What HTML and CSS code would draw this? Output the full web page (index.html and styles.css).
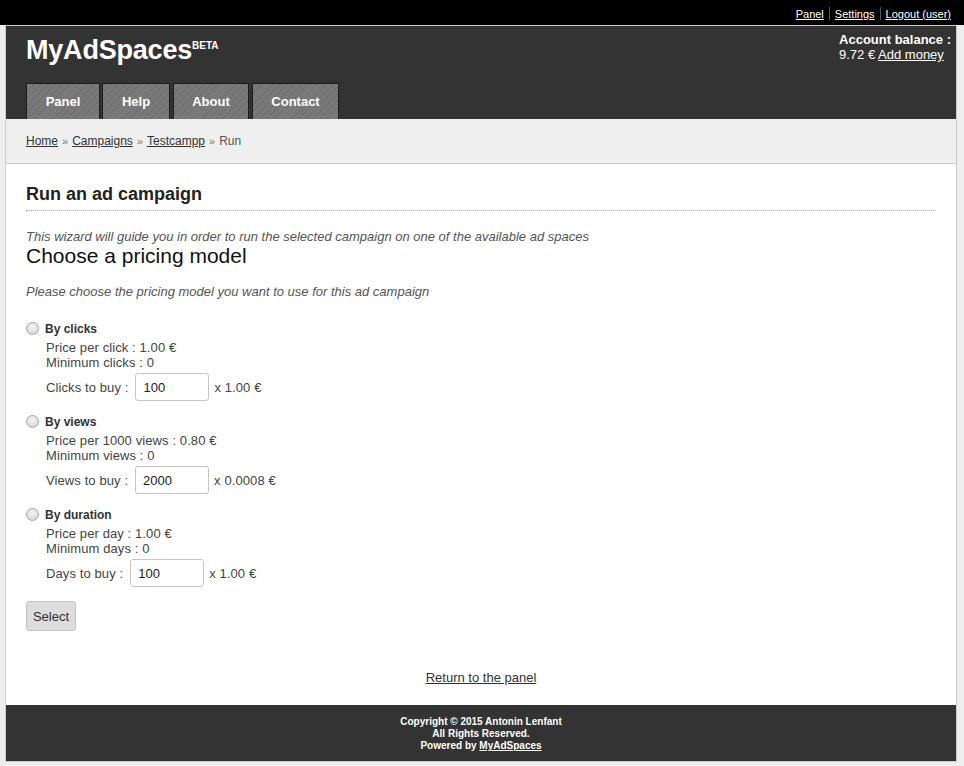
FILE: index.html
```html
<!DOCTYPE html>
<html>
<head>
<meta charset="utf-8">
<title>MyAdSpaces</title>
<link rel="stylesheet" href="styles.css">
</head>
<body>
<div class="topbar">
  <div class="topbar-inner">
    <a href="#">Panel</a><span class="sep"></span><a href="#">Settings</a><span class="sep"></span><a href="#">Logout (user)</a>
  </div>
</div>
<div class="page">
  <header class="header">
    <div class="header-top">
      <div class="logo"><span class="logo-name">MyAdSpaces</span><span class="beta">BETA</span></div>
      <div class="balance">
        <div class="balance-title">Account balance :</div>
        <div class="balance-value">9.72 € <a href="#">Add money</a></div>
      </div>
    </div>
    <nav class="nav">
      <a class="tab tab-panel" href="#">Panel</a>
      <a class="tab tab-help" href="#">Help</a>
      <a class="tab tab-about" href="#">About</a>
      <a class="tab tab-contact" href="#">Contact</a>
    </nav>
  </header>
  <div class="breadcrumb">
    <a href="#">Home</a> <span class="raquo">»</span> <a href="#">Campaigns</a> <span class="raquo">»</span> <a href="#">Testcampp</a> <span class="raquo">»</span> <span class="current">Run</span>
  </div>
  <main class="content">
    <h2 class="title">Run an ad campaign</h2>
    <p class="intro">This wizard will guide you in order to run the selected campaign on one of the available ad spaces</p>
    <h3 class="subtitle">Choose a pricing model</h3>
    <p class="hint">Please choose the pricing model you want to use for this ad campaign</p>

    <div class="option">
      <label class="option-label"><span class="radio"></span>By clicks</label>
      <div class="details">
        <div>Price per click : 1.00 €</div>
        <div>Minimum clicks : 0</div>
        <div class="buy-row"><span>Clicks to buy :</span><input class="qty" type="text" value="100"><span>x 1.00 €</span></div>
      </div>
    </div>

    <div class="option">
      <label class="option-label"><span class="radio"></span>By views</label>
      <div class="details">
        <div>Price per 1000 views : 0.80 €</div>
        <div>Minimum views : 0</div>
        <div class="buy-row"><span>Views to buy :</span><input class="qty" type="text" value="2000"><span>x 0.0008 €</span></div>
      </div>
    </div>

    <div class="option">
      <label class="option-label"><span class="radio"></span>By duration</label>
      <div class="details">
        <div>Price per day : 1.00 €</div>
        <div>Minimum days : 0</div>
        <div class="buy-row"><span>Days to buy :</span><input class="qty" type="text" value="100"><span>x 1.00 €</span></div>
      </div>
    </div>

    <button class="btn" type="button">Select</button>

    <div class="return"><a href="#">Return to the panel</a></div>
  </main>
  <footer class="footer">
    <div>Copyright © 2015 Antonin Lenfant</div>
    <div>All Rights Reserved.</div>
    <div>Powered by <a href="#">MyAdSpaces</a></div>
  </footer>
</div>
</body>
</html>
```
FILE: styles.css
```css
* { box-sizing: border-box; }
html, body {
  margin: 0;
  padding: 0;
}
body {
  background: #eeeeee;
  font-family: "Liberation Sans", Arial, sans-serif;
  font-size: 13px;
  color: #333;
}
a { color: inherit; }

.topbar {
  background: #000;
  height: 25px;
}
.topbar-inner {
  width: 952px;
  margin-left: 5px;
  height: 25px;
  display: flex;
  justify-content: flex-end;
  align-items: flex-end;
  padding: 0 6px 5px 0;
  font-size: 11px;
  line-height: 12px;
}
.topbar-inner a {
  color: #fff;
  text-decoration: underline;
}
.sep {
  width: 1px;
  height: 13px;
  background: #555;
  margin: 6px 5px 0;
  align-self: center;
}

.page {
  width: 952px;
  margin: 0 0 4px 5px;
  border: 1px solid #cccccc;
  background: #fff;
}

.header {
  background: #333333;
  height: 93px;
  padding: 0 5px 0 20px;
  display: flex;
  flex-direction: column;
}
.header-top {
  display: flex;
  justify-content: space-between;
}
.logo {
  display: flex;
  align-items: flex-start;
  color: #fff;
  font-weight: bold;
  margin-top: 8px;
}
.logo-name {
  font-size: 27px;
  line-height: 32px;
  letter-spacing: -0.2px;
}
.beta {
  font-size: 10px;
  line-height: 10px;
  margin-top: 7px;
  margin-left: 0;
}
.balance {
  color: #fff;
  font-size: 13px;
  line-height: 15px;
  margin-top: 6px;
  text-align: left;
}
.balance-title { font-weight: bold; }
.balance-value a { text-decoration: underline; }

.nav {
  margin-top: auto;
  display: flex;
  gap: 3px;
}
.tab {
  height: 36px;
  display: flex;
  align-items: center;
  justify-content: center;
  color: #fff;
  font-weight: bold;
  font-size: 13px;
  text-decoration: none;
  border: 1px solid #1c1c1c;
  border-bottom: none;
  background: repeating-linear-gradient(-45deg, #6f6f6f 0, #6f6f6f 1px, #7d7d7d 1px, #7d7d7d 2.5px);
}
.tab-panel { width: 74px; margin-right: -1px; }
.tab-help { width: 68px; }
.tab-about { width: 76px; }
.tab-contact { width: 87px; }

.breadcrumb {
  background: #efefef;
  border-bottom: 1px solid #cccccc;
  height: 45px;
  padding: 0 20px;
  display: flex;
  align-items: center;
  gap: 4px;
  font-size: 12px;
  color: #333;
}
.breadcrumb a { color: #333; }
.raquo { color: #777; font-size: 11px; }
.current { color: #555; }

.content {
  padding: 20px 20px 0;
}
.title {
  margin: 0;
  font-size: 18px;
  line-height: 20px;
  font-weight: bold;
  color: #222;
  padding-bottom: 6px;
  border-bottom: 1px dotted #aaa;
}
.intro {
  margin: 18px 0 0;
  font-style: italic;
  color: #555;
  line-height: 15px;
}
.subtitle {
  margin: 0;
  font-size: 21px;
  font-weight: normal;
  line-height: 24px;
  color: #111;
}
.hint {
  margin: 16px 0 0;
  font-style: italic;
  color: #555;
  line-height: 15px;
}

.option {
  margin-top: 22px;
}
.option + .option { margin-top: 13px; }
.option-label {
  display: flex;
  align-items: center;
  font-size: 12px;
  font-weight: bold;
  color: #333;
  line-height: 16px;
}
.radio {
  width: 13px;
  height: 13px;
  border-radius: 50%;
  border: 1px solid #a6a6a6;
  background: radial-gradient(circle at 50% 35%, #f4f4f4 0, #dcdcdc 70%, #cfcfcf 100%);
  margin: -2px 6px 0 0;
}
.details {
  padding-left: 20px;
  color: #444;
  font-size: 13px;
  line-height: 15px;
  margin-top: 3px;
  letter-spacing: 0.1px;
}
.buy-row {
  display: flex;
  align-items: center;
  gap: 5px;
  margin-top: 3px;
}
.qty {
  width: 74px;
  height: 28px;
  border: 1px solid #c6c6c6;
  border-radius: 3px;
  padding: 0 7px;
  font-family: "Liberation Sans", Arial, sans-serif;
  font-size: 13px;
  color: #222;
  margin-left: 2px;
}

.btn {
  margin-top: 14px;
  height: 30px;
  width: 50px;
  padding: 0;
  background: #dddddd;
  border: 1px solid #c2c2c2;
  border-radius: 3px;
  font-family: "Liberation Sans", Arial, sans-serif;
  font-size: 13px;
  color: #333;
}

.return {
  text-align: center;
  margin-top: 39px;
  padding-bottom: 20px;
  line-height: 15px;
}
.return a { color: #333; }

.footer {
  background: #333333;
  color: #fff;
  text-align: center;
  font-weight: bold;
  font-size: 10px;
  line-height: 12px;
  padding: 11px 0 9px;
}
.footer a { color: #fff; }
```
